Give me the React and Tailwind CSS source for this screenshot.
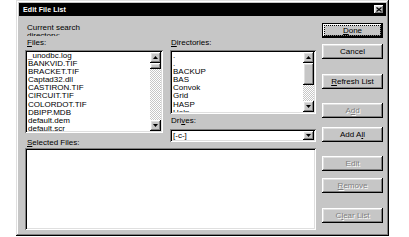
import React from 'react';

const raised = "shadow-[inset_-1px_-1px_#000,inset_1px_1px_#fff,inset_-2px_-2px_#808080,inset_2px_2px_#dfdfdf]";
const sunken = "shadow-[inset_1px_1px_#808080,inset_-1px_-1px_#fff,inset_2px_2px_#000,inset_-2px_-2px_#dfdfdf]";

const files = ["_unodbc.log", "BANKVID.TIF", "BRACKET.TIF", "Captad32.dll", "CASTIRON.TIF", "CIRCUIT.TIF", "COLORDOT.TIF", "DBIPP.MDB", "default.dem", "default.scr"];
const dirs = [".", ".", "BACKUP", "BAS", "Convok", "Grid", "HASP", "Help"];

function Arrow({ down }) {
  return (
    <svg width="5" height="3" viewBox="0 0 5 3">
      <polygon points={down ? "0,0 5,0 2.5,3" : "0,3 5,3 2.5,0"} fill="#000" />
    </svg>
  );
}

function ScrollBtn({ down }) {
  return (
    <div className={`h-[11px] w-[11px] shrink-0 bg-[#c6c6c6] flex items-center justify-center ${raised}`}>
      <Arrow down={down} />
    </div>
  );
}

function Scrollbar({ thumbTop, thumbH }) {
  return (
    <div className="flex w-[11px] flex-col h-full bg-[repeating-conic-gradient(#fff_0_25%,#c6c6c6_0_50%)] bg-[length:2px_2px]">
      <ScrollBtn />
      <div className="flex-1 flex flex-col">
        <div style={{ height: thumbTop }} />
        <div className={`bg-[#c6c6c6] ${raised}`} style={{ height: thumbH }} />
      </div>
      <ScrollBtn down />
    </div>
  );
}

function Btn({ children, def, disabled, className = "" }) {
  const txt = disabled ? "text-[#808080] [text-shadow:1px_1px_0_#fff]" : "text-black";
  if (def) {
    return (
      <div className={`h-[15px] w-[61px] border border-black ${className}`}>
        <div className={`h-full w-full bg-[#c6c6c6] p-[2px] ${raised}`}>
          <div className={`h-full w-full outline outline-1 outline-dotted outline-black flex items-center justify-center ${txt}`}>
            {children}
          </div>
        </div>
      </div>
    );
  }
  return (
    <div className={`h-[15px] w-[61px] bg-[#c6c6c6] flex items-center justify-center ${raised} ${txt} ${className}`}>
      {children}
    </div>
  );
}

export default function App() {
  return (
    <div className="bg-white w-[409px] h-[237px] pl-[16px] font-['Liberation_Sans',Arial,sans-serif] text-[8px] leading-[8px] text-black">
      <div className={`w-[373px] h-[236px] bg-[#c6c6c6] flex flex-col shadow-[inset_-1px_-1px_#000,inset_1px_1px_#dfdfdf,inset_-2px_-2px_#808080,inset_2px_2px_#fff]`}>
        {/* title bar */}
        <div className="mx-[3px] mt-[3px] h-[13px] bg-black flex items-center justify-between pl-[4px] pr-[2px]">
          <span className="text-white text-[7px] font-bold tracking-[0.1px]">Edit File List</span>
          <div className={`h-[9px] w-[10px] bg-[#c6c6c6] flex items-center justify-center ${raised}`}>
            <svg width="6" height="5" viewBox="0 0 6 5">
              <path d="M0.5 0.5 L5.5 4.5 M5.5 0.5 L0.5 4.5" stroke="#000" strokeWidth="1.2" />
            </svg>
          </div>
        </div>

        <div className="flex pl-[9px]">
          {/* left area */}
          <div className="w-[291px] flex flex-col">
            <div className="mt-[8px] h-[12px] overflow-hidden pl-[2px]">
              Current search<br />directory:
            </div>
            <div className="flex gap-[7px] items-start">
              {/* files column */}
              <div className="w-[138px] flex flex-col">
                <div className="mt-[3px] h-[8px] pl-[2px]"><u>F</u>iles:</div>
                <div className={`mt-[3px] h-[83px] bg-white flex p-[2px] ${sunken}`}>
                  <div className="flex-1 overflow-hidden pl-[1px] leading-[8.1px]">
                    {files.map((f, i) => <div key={i} className="whitespace-nowrap">{f}</div>)}
                  </div>
                  <Scrollbar thumbTop={0} thumbH={6} />
                </div>
                <div className="mt-[6px] h-[8px] pl-[2px]"><u>S</u>elected Files:</div>
              </div>
              {/* directories column */}
              <div className="w-[146px] flex flex-col">
                <div className="mt-[3px] h-[8px] pl-[1px]"><u>D</u>irectories:</div>
                <div className={`mt-[3px] h-[64px] bg-white flex p-[2px] ${sunken}`}>
                  <div className="flex-1 overflow-hidden pl-[1px] leading-[8.1px]">
                    {dirs.map((d, i) => <div key={i} className="whitespace-nowrap">{d}</div>)}
                  </div>
                  <Scrollbar thumbTop={0} thumbH={22} />
                </div>
                <div className="mt-[3px] h-[8px] pl-[1px]">Dri<u>v</u>es:</div>
                <div className={`mt-[4px] h-[13px] bg-white flex items-center p-[2px] ${sunken}`}>
                  <div className="flex-1 pl-[1px]">[-c-]</div>
                  <div className={`h-[9px] w-[11px] bg-[#c6c6c6] flex items-center justify-center ${raised}`}>
                    <Arrow down />
                  </div>
                </div>
              </div>
            </div>
            <div className={`mt-[1px] h-[82px] bg-white ${sunken}`} />
          </div>

          {/* buttons */}
          <div className="ml-[6px] flex flex-col">
            <Btn def className="mt-[7px]"><u>D</u>one</Btn>
            <Btn className="mt-[6px]">Cancel</Btn>
            <Btn className="mt-[15px]"><u>R</u>efresh List</Btn>
            <Btn disabled className="mt-[14px]">A<u>d</u>d</Btn>
            <Btn className="mt-[9px]">Add A<u>l</u>l</Btn>
            <Btn disabled className="mt-[14px]">Edit</Btn>
            <Btn disabled className="mt-[7px]"><u>R</u>emove</Btn>
            <Btn disabled className="mt-[15px]">C<u>l</u>ear List</Btn>
          </div>
        </div>
      </div>
    </div>
  );
}
